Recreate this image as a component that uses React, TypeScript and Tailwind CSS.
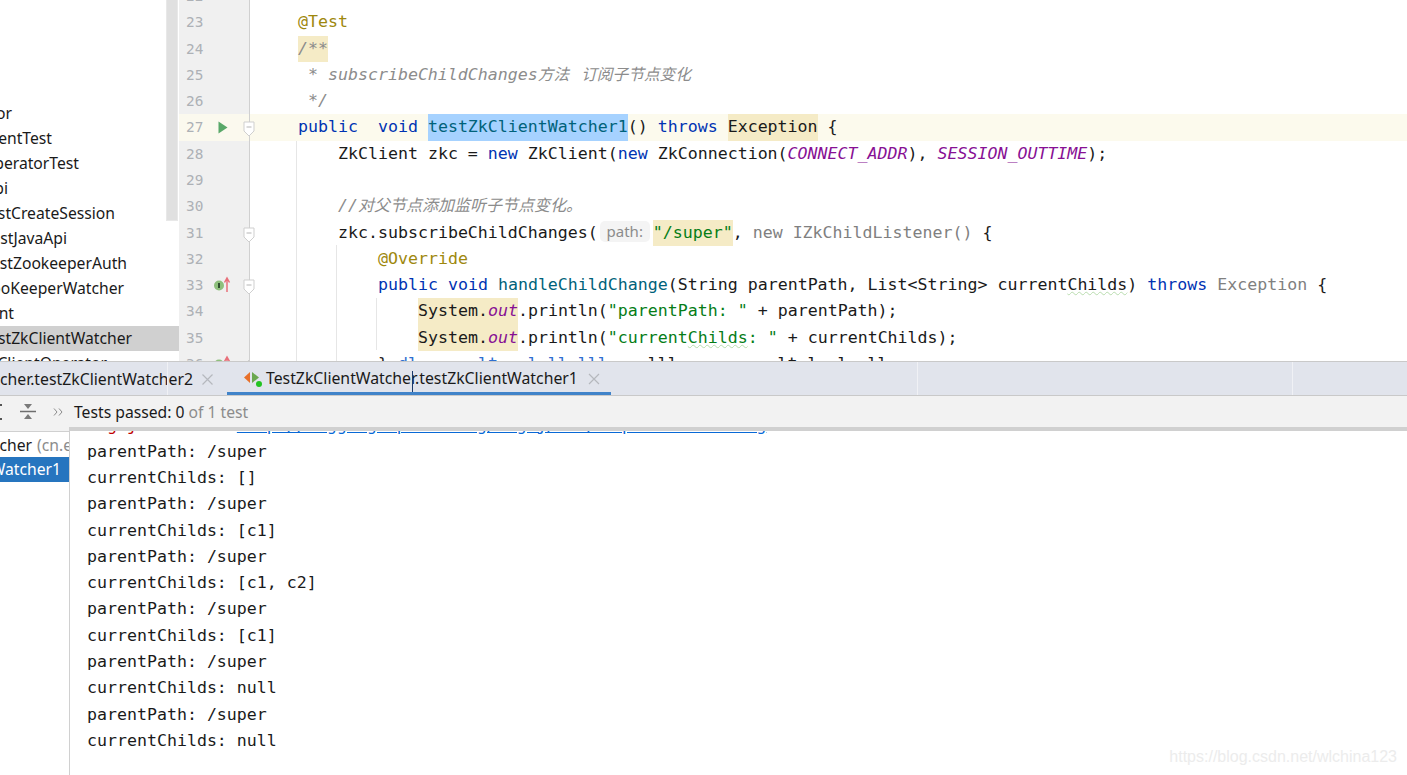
import React from 'react';

const MONO = { fontFamily: '"DejaVu Sans Mono", "Noto Sans CJK SC", monospace' };
const UI = { fontFamily: '"Noto Sans", "Noto Sans CJK SC", sans-serif' };

const KW = 'text-[#0033b3]';
const FN = 'text-[#00627a]';
const STR = 'text-[#067d17]';
const ANN = 'text-[#9e880d]';
const CMT = 'text-[#8c8c8c] italic';
const STATIC = 'text-[#871094] italic';
const GRAY = 'text-[#808080]';
const HL = 'inline-block bg-[#f5ebc6]';

const TREE_ROWS = [
  { name: 'ZkOperator', w: 'w-[12px]' },
  { name: 'ZkClientTest', w: 'w-[52px]' },
  { name: 'ZkOperatorTest', w: 'w-[79px]' },
  { name: 'javaapi', w: 'w-[8px]' },
  { name: 'TestCreateSession', w: 'w-[115px]' },
  { name: 'TestJavaApi', w: 'w-[67px]' },
  { name: 'TestZookeeperAuth', w: 'w-[127px]' },
  { name: 'ZooKeeperWatcher', w: 'w-[124px]' },
  { name: 'client', w: 'w-[14px]' },
  { name: 'TestZkClientWatcher', w: 'w-[132px]', selected: true },
  { name: 'TestZkClientOperator', w: 'w-[107px]' },
];

const CONSOLE_LINES = [
  'parentPath: /super',
  'currentChilds: []',
  'parentPath: /super',
  'currentChilds: [c1]',
  'parentPath: /super',
  'currentChilds: [c1, c2]',
  'parentPath: /super',
  'currentChilds: [c1]',
  'parentPath: /super',
  'currentChilds: null',
  'parentPath: /super',
  'currentChilds: null',
];

const FoldMark = ({ up }: { up?: boolean }) => (
  <svg width="12" height="16" viewBox="0 0 12 16" className="absolute right-[-6px] top-[7px]">
    {up ? (
      <path d="M1 15V7l5-5 5 5v8z" fill="#fff" stroke="#cfcfcf" />
    ) : (
      <>
        <path d="M1 1h10v9l-5 5-5-5z" fill="#fff" stroke="#cfcfcf" />
        <path d="M3.5 6h5" stroke="#b5b5b5" />
      </>
    )}
  </svg>
);

const RunIcon = () => (
  <svg width="10" height="13" viewBox="0 0 10 13" className="ml-[5px]">
    <path d="M0.5 0.5 9.5 6.5 0.5 12.5z" fill="#59a869" />
  </svg>
);

const ImplementIcon = () => (
  <svg width="20" height="18" viewBox="0 0 20 18">
    <circle cx="6" cy="9.5" r="5" fill="#8ec07c" />
    <path d="M6 7v5" stroke="#2f4f2f" strokeWidth="2" />
    <path d="M14 16V3M11.5 6.5 14 2l2.5 4.5" fill="none" stroke="#e8707a" strokeWidth="1.5" />
  </svg>
);

const Line = ({
  n,
  children,
  indent = 'pl-[48px]',
  active,
  icon,
  fold,
}: {
  n: number;
  children?: React.ReactNode;
  indent?: string;
  active?: boolean;
  icon?: React.ReactNode;
  fold?: 'down' | 'up';
}) => (
  <div className={`flex h-[26.27px] leading-[26.27px] ${active ? 'bg-[#fcfaed]' : ''}`}>
    <div
      className={`relative flex w-[71px] shrink-0 items-center border-r border-[#d0d0d0] pl-[7px] ${
        active ? 'bg-[#fbf9ee]' : 'bg-[#f0f0f0]'
      }`}
    >
      <span className="w-[27px] text-[14.4px] text-[#adb1b6]">{n}</span>
      {icon}
      {fold && <FoldMark up={fold === 'up'} />}
    </div>
    <div className={`whitespace-pre text-[#1a1a1a] ${indent}`}>{children}</div>
  </div>
);

const SystemOut = () => (
  <span className={HL}>
    System.<span className={STATIC}>out</span>
  </span>
);

const Editor = () => (
  <div className="relative min-w-0 flex-1 overflow-hidden text-[16.6px]" style={MONO}>
    <div className="-mt-[16.9px]">
      <Line n={22} />
      <Line n={23}>
        <span className={ANN}>@Test</span>
      </Line>
      <Line n={24}>
        <span className={`${HL} ${CMT}`}>/**</span>
      </Line>
      <Line n={25}>
        <span className={CMT}>
          {' * subscribeChildChanges'}
          <span className="text-[15.7px]">方法</span>
          <span className="ml-[12px] text-[15.7px]">订阅子节点变化</span>
        </span>
      </Line>
      <Line n={26}>
        <span className={CMT}>{' */'}</span>
      </Line>
      <Line n={27} active icon={<RunIcon />} fold="down">
        <span className={KW}>public</span>
        {'  '}
        <span className={KW}>void</span>{' '}
        <span className={`inline-block bg-[#a6d2ff] ${FN}`}>testZkClientWatcher1</span>
        {'() '}
        <span className={KW}>throws</span> <span className={HL}>Exception</span>
        {' {'}
      </Line>
      <Line n={28} indent="pl-[88px]">
        ZkClient zkc = <span className={KW}>new</span> ZkClient(<span className={KW}>new</span> ZkConnection(
        <span className={STATIC}>CONNECT_ADDR</span>), <span className={STATIC}>SESSION_OUTTIME</span>);
      </Line>
      <Line n={29} />
      <Line n={30} indent="pl-[88px]">
        <span className={CMT}>
          //<span className="text-[16px]">对父节点添加监听子节点变化。</span>
        </span>
      </Line>
      <Line n={31} indent="pl-[88px]" fold="down">
        zkc.subscribeChildChanges(
        <span
          className="ml-[2px] mr-[3px] inline-block h-[21px] w-[50px] rounded-[5px] bg-[#f4f4f4] text-center align-[1px] text-[15px] leading-[21px] text-[#8c8c8c]"
          style={UI}
        >
          path:
        </span>
        <span className={`${HL} ${STR}`}>"/super"</span>, <span className={GRAY}>new IZkChildListener()</span>
        {' {'}
      </Line>
      <Line n={32} indent="pl-[128px]">
        <span className={ANN}>@Override</span>
      </Line>
      <Line n={33} indent="pl-[128px]" icon={<ImplementIcon />} fold="down">
        <span className={KW}>public</span> <span className={KW}>void</span>{' '}
        <span className={FN}>handleChildChange</span>(String parentPath, List&lt;String&gt; current
        <span className="underline decoration-[#b8dcae] decoration-wavy decoration-1">Childs</span>){' '}
        <span className={KW}>throws</span> <span className={GRAY}>Exception</span>
        {' {'}
      </Line>
      <Line n={34} indent="pl-[168px]">
        <SystemOut />
        .println(<span className={STR}>"parentPath: "</span> + parentPath);
      </Line>
      <Line n={35} indent="pl-[168px]">
        <SystemOut />
        .println(
        <span className={STR}>
          "current<span className="underline decoration-[#b8dcae] decoration-wavy decoration-1">Childs</span>: "
        </span>{' '}
        + currentChilds);
      </Line>
      <Line n={36} indent="pl-[128px]" icon={<ImplementIcon />} fold="up">
        {'} '}
        <span className="text-[#2f6fd0]">{'dl      lt   l ll lll'}</span>
        {'    lll          lt l  l  ll'}
      </Line>
    </div>
    {/* indent guides */}
    <div className="absolute left-[117px] top-[141px] h-[220px] w-px bg-[#e6e6e6]" />
    <div className="absolute left-[157px] top-[245px] h-[116px] w-px bg-[#e6e6e6]" />
    <div className="absolute left-[197px] top-[298px] h-[52px] w-px bg-[#e6e6e6]" />
  </div>
);

const ProjectTree = () => (
  <div className="relative h-full w-[179px] shrink-0 overflow-hidden bg-white text-[15.7px] text-[#1a1a1a]" style={UI}>
    <div className="pt-[101px]">
      {TREE_ROWS.map((row) => (
        <div key={row.name} className={`h-[25px] leading-[25px] ${row.selected ? 'bg-[#d0d0d0]' : ''}`}>
          <div className={`flex justify-end whitespace-nowrap ${row.w}`}>{row.name}</div>
        </div>
      ))}
    </div>
    <div className="absolute left-[166px] top-0 h-[221px] w-[12px] border-x border-b border-[#e8e8e8] bg-[#e0e0e0]" />
  </div>
);

const TabBar = () => (
  <div
    className="relative flex h-[35px] shrink-0 items-stretch border-y border-[#c9c9c9] bg-[#e1e4ec] text-[15.8px] text-[#1a1a1a]"
    style={UI}
  >
    <div className="flex w-[227px] shrink-0 items-center justify-end gap-[8px] overflow-hidden whitespace-nowrap pr-[13px] pt-[2px]">
      <span>TestZkClientWatcher.testZkClientWatcher2</span>
      <span className="text-[#b5b8be]">
        <svg width="13" height="13" viewBox="0 0 13 13" className="block">
          <path d="M1.5 1.5l10 10M11.5 1.5l-10 10" stroke="currentColor" strokeWidth="1.2" />
        </svg>
      </span>
    </div>
    <div className="relative flex w-[384px] shrink-0 items-center whitespace-nowrap border-b-[3px] border-[#4083c9] pl-[16px] pt-[3px]">
      <svg width="20" height="20" viewBox="0 0 20 20" className="mr-[3px]">
        <path d="M7 3v11L1 8.5z" fill="#e8702a" />
        <path d="M9 3v11l7-5.5z" fill="#6aa84f" />
        <circle cx="16" cy="15" r="3" fill="#22c322" />
      </svg>
      <span>TestZkClientWatcher.testZkClientWatcher1</span>
      <svg width="12" height="12" viewBox="0 0 12 12" className="ml-[10px]">
        <path d="M1 1l10 10M11 1L1 11" stroke="#b5b8be" strokeWidth="1.2" />
      </svg>
    </div>
    <div className="flex-1" />
    {/* splitters and mouse caret lying over the strip */}
    <div className="absolute left-[167px] top-0 h-full w-px bg-[#f0f1f5]" />
    <div className="absolute left-[917px] top-0 h-full w-px bg-[#f0f1f5]" />
    <div className="absolute left-[1292px] top-0 h-full w-px bg-[#f0f1f5]" />
    <div className="absolute left-[412px] top-[9px] h-[21px] w-px bg-[#1a3a6a]" />
  </div>
);

const Toolbar = () => (
  <div className="flex h-[31px] shrink-0 items-center bg-[#f2f2f2] text-[15.7px]" style={UI}>
    <svg width="20" height="16" viewBox="0 0 20 16" className="shrink-0">
      <path d="M0 1h2M0 15h2" stroke="#555" strokeWidth="2" />
    </svg>
    <svg width="16" height="15" viewBox="0 0 16 15" className="shrink-0">
      <path d="M4 0h8L8 5zM4 15h8L8 10z" fill="#7a7a7a" />
      <path d="M0 7.5h16" stroke="#6e6e6e" strokeWidth="1.5" />
    </svg>
    <svg width="10" height="10" viewBox="0 0 10 10" className="ml-[17px] shrink-0">
      <path d="M1 1.5 4 5 1 8.5M6 1.5 9 5 6 8.5" fill="none" stroke="#8c8c8c" />
    </svg>
    <span className="ml-[11px] pt-[2px] text-[#1a1a1a]">
      Tests passed: 0 <span className="text-[#8c8c8c]">of 1 test</span>
    </span>
  </div>
);

const TestTree = () => (
  <div className="w-[70px] shrink-0 overflow-hidden border-r border-[#d0d0d0] text-[15.7px] text-[#1a1a1a]" style={UI}>
    <div className="h-[4px] bg-[#f2f2f2]" />
    <div className="border-t border-[#d0d0d0]">
      <div className="flex h-[25px] overflow-hidden whitespace-nowrap leading-[27px]">
        <div className="flex w-[32px] shrink-0 justify-end">TestZkClientWatcher</div>
        <span className="ml-[5px] shrink-0 text-[#8c8c8c]">(cn.example)</span>
      </div>
      <div className="h-[25px] bg-[#2675bf] leading-[25px] text-white">
        <div className="flex w-[61px] justify-end whitespace-nowrap">testZkClientWatcher1</div>
      </div>
    </div>
  </div>
);

const Console = () => (
  <div className="relative min-w-0 flex-1 overflow-hidden border-t-4 border-[#d0d0d0] text-[16.6px] text-[#1a1a1a]" style={MONO}>
    <div className="-mt-[18.4px] pl-[17px]">
      <div className="h-[26.27px] whitespace-pre leading-[26.27px] text-[#c00000]">
        {'log4j:WARN See '}
        <span className="text-[#0969d6] underline">http://logging.apache.org/log4j/1.2/faq.html#noconfig</span>
        {' for more info.'}
      </div>
      {CONSOLE_LINES.map((line, i) => (
        <div key={i} className="h-[26.27px] whitespace-pre leading-[26.27px]">
          {line}
        </div>
      ))}
    </div>
  </div>
);

export default function App() {
  return (
    <div className="relative flex h-[775px] w-[1407px] flex-col overflow-hidden bg-white">
      <div className="flex h-[361px] shrink-0">
        <ProjectTree />
        <Editor />
      </div>
      <TabBar />
      <Toolbar />
      <div className="flex min-h-0 flex-1">
        <TestTree />
        <Console />
      </div>
      <div
        className="absolute bottom-[6px] right-[10px] text-[16px] text-[#ececec]"
        style={{ fontFamily: '"Liberation Sans", sans-serif' }}
      >
        https://blog.csdn.net/wlchina123
      </div>
    </div>
  );
}
